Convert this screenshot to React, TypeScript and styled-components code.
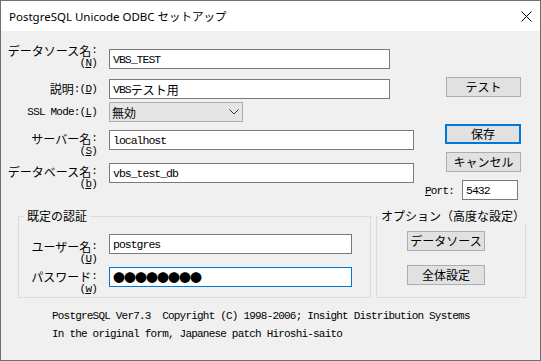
import React from "react";
import styled, { createGlobalStyle } from "styled-components";

const GlobalStyle = createGlobalStyle`
  html, body {
    margin: 0;
    padding: 0;
    background: #ffffff;
  }
  #root {
    width: 541px;
    height: 361px;
  }
`;

const Window = styled.div`
  width: 541px;
  height: 361px;
  box-sizing: border-box;
  border: 1px solid #707070;
  background: #f0f0f0;
  display: flex;
  flex-direction: column;
  font-family: "Noto Sans CJK JP", sans-serif;
  font-size: 12px;
  color: #000;
  overflow: hidden;
`;

const TitleBar = styled.div`
  height: 30px;
  flex: none;
  background: #ffffff;
  display: flex;
  align-items: center;
  justify-content: space-between;
  padding: 0 8px 0 8px;
`;

const TitleText = styled.span`
  font-family: "Noto Sans", "Noto Sans CJK JP", sans-serif;
  font-size: 11.5px;
  color: #000;
`;

const TopSection = styled.div`
  display: flex;
  height: 169px;
  flex: none;
`;

const LeftForm = styled.div`
  width: 414px;
  display: flex;
  flex-direction: column;
`;

const Field = styled.div<{ $mt: number }>`
  display: flex;
  align-items: flex-start;
  margin-top: ${(p) => p.$mt}px;
`;

const FieldLabel = styled.div<{ $w?: number; $mt?: number }>`
  width: ${(p) => p.$w ?? 96}px;
  flex: none;
  display: flex;
  flex-direction: column;
  align-items: flex-end;
  white-space: nowrap;
  margin-top: ${(p) => p.$mt ?? 0}px;
`;

const LabelLine = styled.div<{ $h: number }>`
  height: ${(p) => p.$h}px;
  line-height: ${(p) => p.$h}px;
  display: flex;
  align-items: center;
`;

const Mono = styled.span`
  font-family: "Liberation Mono", monospace;
  font-size: 11px;
  letter-spacing: -0.8px;
`;

const Key = styled.span`
  text-decoration: underline;
  text-underline-offset: 1px;
`;

const TextBox = styled.div<{ $w: number; $mt?: number; $ml?: number; $focus?: boolean }>`
  width: ${(p) => p.$w}px;
  height: 20px;
  flex: none;
  box-sizing: border-box;
  margin-left: ${(p) => p.$ml ?? 12}px;
  margin-top: ${(p) => p.$mt ?? 0}px;
  padding-left: 3px;
  border: 1px solid ${(p) => (p.$focus ? "#0078d7" : "#7a7a7a")};
  background: #ffffff;
  display: flex;
  align-items: center;
  white-space: pre;
  font-family: "Liberation Mono", "Noto Sans CJK JP", monospace;
  font-size: 11.5px;
  letter-spacing: -1px;
`;

const Jp = styled.span`
  font-family: "Noto Sans CJK JP", sans-serif;
  font-size: 12px;
  letter-spacing: 0;
`;

const Dots = styled.span`
  font-family: "Noto Sans CJK JP", sans-serif;
  font-size: 12px;
  letter-spacing: -1px;
`;

const Combo = styled.div`
  width: 134px;
  height: 20px;
  flex: none;
  box-sizing: border-box;
  margin-left: 12px;
  padding: 0 3px 0 2px;
  border: 1px solid #adadad;
  background: #e5e5e5;
  display: flex;
  align-items: center;
  justify-content: space-between;
`;

const RightPane = styled.div`
  flex: 1;
  display: flex;
  flex-direction: column;
  padding-left: 10px;
`;

const Btn = styled.button<{ $w: number; $mt: number; $ml: number; $default?: boolean }>`
  width: ${(p) => p.$w}px;
  height: 20px;
  flex: none;
  box-sizing: border-box;
  margin: ${(p) => p.$mt}px 0 0 ${(p) => p.$ml}px;
  padding: 0;
  background: #e1e1e1;
  border: 1px solid ${(p) => (p.$default ? "#0078d7" : "#adadad")};
  box-shadow: ${(p) => (p.$default ? "inset 0 0 0 1px #0078d7" : "none")};
  font-family: "Noto Sans CJK JP", sans-serif;
  font-size: 12px;
  line-height: 18px;
  color: #000;
`;

const PortRow = styled.div`
  display: flex;
  align-items: center;
  margin-top: 8px;
  height: 20px;
`;

const PortLabel = styled.span`
  width: 37px;
  flex: none;
  line-height: 20px;
`;

const GroupsRow = styled.div`
  display: flex;
  gap: 5px;
  margin-top: 9px;
  padding-left: 17px;
`;

const Group = styled.fieldset<{ $w: number }>`
  width: ${(p) => p.$w}px;
  height: 89px;
  box-sizing: border-box;
  margin: 0;
  padding: 0;
  border: 1px solid #dcdcdc;
  min-inline-size: 0;
`;

const Legend = styled.legend<{ $ml: number }>`
  margin-left: ${(p) => p.$ml}px;
  padding: 0 3px;
  height: 14px;
  line-height: 14px;
  font-size: 12px;
  white-space: nowrap;
`;

const GroupColumn = styled.div`
  display: flex;
  flex-direction: column;
`;

const Footer = styled.div`
  margin-top: 9px;
  padding-left: 51px;
  display: flex;
  flex-direction: column;
`;

const FooterLine = styled.div`
  height: 18px;
  line-height: 18px;
  white-space: pre;
  font-family: "Liberation Mono", monospace;
  font-size: 11px;
  letter-spacing: -0.8px;
`;

function CloseIcon() {
  return (
    <svg width="11" height="11" viewBox="0 0 11 11">
      <path d="M0.5 0.5L10.5 10.5M10.5 0.5L0.5 10.5" stroke="#000" strokeWidth="1" fill="none" />
    </svg>
  );
}

function Chevron() {
  return (
    <svg width="10" height="6" viewBox="0 0 10 6">
      <polyline points="0.5,0.5 5,5 9.5,0.5" stroke="#333" strokeWidth="1" fill="none" />
    </svg>
  );
}

function TwoLineLabel(props: { text: string; hotkey: string; w?: number; mt?: number }) {
  return (
    <FieldLabel $w={props.w} $mt={props.mt}>
      <LabelLine $h={13}>
        {props.text}
        <Mono>:</Mono>
      </LabelLine>
      <LabelLine $h={13}>
        <Mono>
          (<Key>{props.hotkey}</Key>)
        </Mono>
      </LabelLine>
    </FieldLabel>
  );
}

export default function App() {
  return (
    <>
      <GlobalStyle />
      <Window>
        <TitleBar>
          <TitleText>PostgreSQL Unicode ODBC セットアップ</TitleText>
          <CloseIcon />
        </TitleBar>

        <TopSection>
          <LeftForm>
            <Field $mt={13}>
              <TwoLineLabel text="データソース名" hotkey="N" />
              <TextBox $w={281} $mt={5}>VBS_TEST</TextBox>
            </Field>

            <Field $mt={9}>
              <FieldLabel>
                <LabelLine $h={20}>
                  説明
                  <Mono>
                    :(<Key>D</Key>)
                  </Mono>
                </LabelLine>
              </FieldLabel>
              <TextBox $w={281}>
                VBS<Jp>テスト用</Jp>
              </TextBox>
            </Field>

            <Field $mt={3}>
              <FieldLabel>
                <LabelLine $h={20}>
                  <Mono>
                    SSL Mode:(<Key>L</Key>)
                  </Mono>
                </LabelLine>
              </FieldLabel>
              <Combo>
                <span>無効</span>
                <Chevron />
              </Combo>
            </Field>

            <Field $mt={8}>
              <TwoLineLabel text="サーバー名" hotkey="S" mt={2} />
              <TextBox $w={305}>localhost</TextBox>
            </Field>

            <Field $mt={5}>
              <TwoLineLabel text="データベース名" hotkey="b" mt={2} />
              <TextBox $w={305}>vbs_test_db</TextBox>
            </Field>
          </LeftForm>

          <RightPane>
            <Btn $w={75} $mt={46} $ml={21}>テスト</Btn>
            <Btn $w={76} $mt={27} $ml={20} $default>
              保存
            </Btn>
            <Btn $w={75} $mt={8} $ml={21}>キャンセル</Btn>
            <PortRow>
              <PortLabel>
                <Mono>
                  <Key>P</Key>ort:
                </Mono>
              </PortLabel>
              <TextBox $w={56} $ml={0}>
                5432
              </TextBox>
            </PortRow>
          </RightPane>
        </TopSection>

        <GroupsRow>
          <Group $w={353}>
            <Legend $ml={5}>既定の認証</Legend>
            <Field $mt={11}>
              <TwoLineLabel text="ユーザー名" hotkey="U" w={78} mt={6} />
              <TextBox $w={243}>postgres</TextBox>
            </Field>
            <Field $mt={1}>
              <TwoLineLabel text="パスワード" hotkey="w" w={78} mt={3} />
              <TextBox $w={243} $focus>
                <Dots>●●●●●●●●</Dots>
              </TextBox>
            </Field>
          </Group>

          <Group $w={150}>
            <Legend $ml={1}>オプション（高度な設定）</Legend>
            <GroupColumn>
              <Btn $w={78} $mt={8} $ml={30}>データソース</Btn>
              <Btn $w={78} $mt={14} $ml={30}>全体設定</Btn>
            </GroupColumn>
          </Group>
        </GroupsRow>

        <Footer>
          <FooterLine>PostgreSQL Ver7.3  Copyright (C) 1998-2006; Insight Distribution Systems</FooterLine>
          <FooterLine>In the original form, Japanese patch Hiroshi-saito</FooterLine>
        </Footer>
      </Window>
    </>
  );
}
